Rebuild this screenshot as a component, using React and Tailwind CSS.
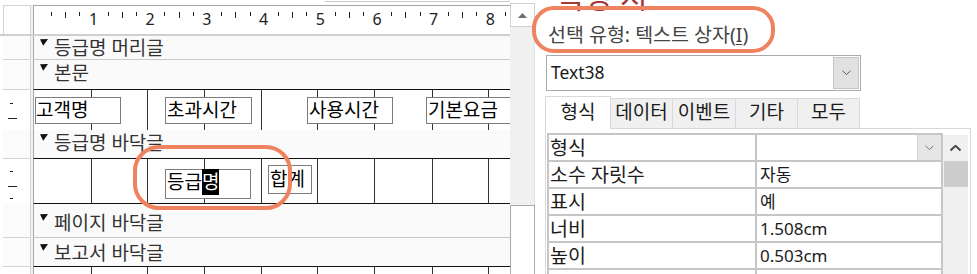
import React from "react";

// column widths of the 1cm design grid (line drawn on the right edge of each)
const gridCols = [
  "w-[58px]",
  "w-[56px]",
  "w-[57px]",
  "w-[57px]",
  "w-[56px]",
  "w-[57px]",
  "w-[58px]",
  "w-[56px]",
];

const GridLines = () => (
  <div className="flex h-full">
    {gridCols.map((w, i) => (
      <div key={i} className={`h-full shrink-0 border-r border-[#333] ${w}`} />
    ))}
  </div>
);

const Marker = () => (
  <svg width="8" height="7" viewBox="0 0 8 7" className="mt-[1px] shrink-0">
    <path d="M0 0.3 L8 0 L3.2 6.8 Z" fill="#111" />
  </svg>
);

const Ruler = () => {
  const ticks = [];
  const nums = [];
  for (let k = 0; k < 9; k++) {
    const p = 2.8 + 56.7 * k;
    [1, 2, 3].forEach((q) => {
      const x = Math.round(p + 14.2 * q) + 0.5;
      ticks.push(
        <line key={`${k}-${q}`} x1={x} x2={x} y1={6} y2={q === 2 ? 12 : 10} stroke="#222" strokeWidth="1" />
      );
    });
    if (k > 0) {
      nums.push(
        <text key={k} x={p} y={19} fontSize="16" textAnchor="middle" fill="#222" fontFamily="Noto Sans, sans-serif">
          {k}
        </text>
      );
    }
  }
  return (
    <svg width="476" height="28" className="block">
      {ticks}
      {nums}
    </svg>
  );
};

const VTicks = ({ h, marks }) => (
  <svg width="27" height={h} className="block">
    {marks.map(([y, long], i) => (
      <line key={i} x1={long ? 5 : 7} x2={long ? 14 : 10} y1={y + 0.5} y2={y + 0.5} stroke="#222" />
    ))}
  </svg>
);

const Section = ({ label, rowClass, barClass, pad }) => (
  <div className={`flex shrink-0 ${rowClass}`}>
    <div className="ml-[3px] w-[28px] shrink-0 border-b border-r border-[#d3d3d3] bg-[#fbfbfb]" />
    <div className="w-[2px] shrink-0 bg-[#f2f2f2]" />
    <div className={`flex flex-1 items-start gap-[6px] border-l border-[#a6a6a6] bg-[#fafafa] pl-[6px] ${barClass} ${pad}`}>
      <Marker />
      <span className="text-[19px] leading-[20px] text-[#333]">{label}</span>
    </div>
  </div>
);

const Field = ({ className, children }) => (
  <div className={`absolute border border-[#7c7c7c] bg-white text-[19px] leading-[20px] whitespace-nowrap text-black ${className}`}>
    {children}
  </div>
);

const DesignView = () => (
  <div className="flex w-[510px] shrink-0 flex-col">
    <div className="h-[5px] shrink-0">
      <div className="ml-[325px] mt-[1px] border-t border-[#c8c8c8]" />
    </div>

    <div className="flex h-[31px] shrink-0 border-b-2 border-[#cfcfcf]">
      <div className="ml-[3px] w-[28px] shrink-0 border-x border-t border-[#d3d3d3]" />
      <div className="w-[2px] shrink-0 bg-[#f2f2f2]" />
      <div className="flex-1 border-l border-t border-[#a6a6a6] bg-white">
        <Ruler />
      </div>
    </div>

    <Section label="등급명 머리글" rowClass="h-[24px]" barClass="border-b border-b-[#c8c8c8]" pad="pt-[2px]" />
    <Section label="본문" rowClass="h-[30px]" barClass="border-b border-b-[#111]" pad="pt-[3px]" />

    <div className="flex h-[40px] shrink-0">
      <div className="ml-[3px] w-[28px] shrink-0 border-r border-[#d3d3d3] bg-white">
        <VTicks h={40} marks={[[13, false], [28, true]]} />
      </div>
      <div className="w-[2px] shrink-0 bg-[#f2f2f2]" />
      <div className="relative flex-1 overflow-hidden border-l border-[#a6a6a6] bg-white">
        <GridLines />
        <Field className="left-[1px] top-[7px] h-[27px] w-[86px] pt-[2px]">고객명</Field>
        <Field className="left-[131px] top-[7px] h-[27px] w-[87px] pl-[1px] pt-[2px]">초과시간</Field>
        <Field className="left-[273px] top-[7px] h-[27px] w-[86px] pl-[1px] pt-[2px]">사용시간</Field>
        <Field className="left-[392px] top-[7px] h-[27px] w-[90px] pl-[1px] pt-[2px]">기본요금</Field>
      </div>
    </div>

    <Section label="등급명 바닥글" rowClass="h-[29px]" barClass="border-b border-b-[#111]" pad="pt-[3px]" />

    <div className="flex h-[45px] shrink-0">
      <div className="ml-[3px] w-[28px] shrink-0 border-r border-[#d3d3d3] bg-white">
        <VTicks h={45} marks={[[12, false], [27, true], [39, false]]} />
      </div>
      <div className="w-[2px] shrink-0 bg-[#f2f2f2]" />
      <div className="relative flex-1 overflow-hidden border-b border-l border-[#a6a6a6] border-b-[#111] bg-white">
        <GridLines />
        <Field className="left-[131px] top-[10px] h-[30px] w-[86px] pl-[1px] pt-[2px]">
          등급<span className="bg-black text-white">명</span>
        </Field>
        <Field className="left-[234px] top-[6px] h-[29px] w-[44px] pl-[1px] pt-[3px]">합계</Field>
      </div>
    </div>

    <Section label="페이지 바닥글" rowClass="h-[34px]" barClass="border-b border-b-[#c8c8c8]" pad="pt-[9px]" />
    <Section label="보고서 바닥글" rowClass="h-[29px]" barClass="border-b border-b-[#111]" pad="pt-[5px]" />

    <div className="flex flex-1">
      <div className="ml-[3px] w-[28px] shrink-0 border-r border-[#d3d3d3] bg-white" />
      <div className="w-[2px] shrink-0 bg-[#f2f2f2]" />
      <div className="flex-1 overflow-hidden border-l border-[#a6a6a6] bg-white">
        <GridLines />
      </div>
    </div>
  </div>
);

const ScrollColumn = () => (
  <div className="flex w-[25px] shrink-0 flex-col pt-[3px]">
    <div className="flex h-[24px] shrink-0 items-center justify-center border border-[#d0d0d0] bg-white">
      <svg width="9" height="5" viewBox="0 0 9 5">
        <path d="M0 5 L4.5 0 L9 5 Z" fill="#6e6e6e" />
      </svg>
    </div>
    <div className="h-[178px] shrink-0 border-r border-[#e2e2e2] bg-[#f0f0f0]" />
    <div className="flex-1 border-x border-t border-[#a9a9a9] bg-white" />
  </div>
);

const Chevron = ({ up, color = "#666", w = 9, sw = 1 }) => (
  <svg width={w} height={Math.ceil(w / 2) + 1} viewBox={`0 0 ${w} ${Math.ceil(w / 2) + 1}`}>
    <path
      d={up ? `M0.5 ${w / 2} L${w / 2} 0.8 L${w - 0.5} ${w / 2}` : `M0.5 0.8 L${w / 2} ${w / 2} L${w - 0.5} 0.8`}
      fill="none"
      stroke={color}
      strokeWidth={sw}
    />
  </svg>
);

const tabs = [
  ["형식", "w-[66px]", true],
  ["데이터", "w-[62px]"],
  ["이벤트", "w-[63px]"],
  ["기타", "w-[62px]"],
  ["모두", "w-[62px]"],
];

const rows = [
  ["형식", "", true],
  ["소수 자릿수", "자동"],
  ["표시", "예"],
  ["너비", "1.508cm"],
  ["높이", "0.503cm"],
  ["", ""],
];

const PropertySheet = () => (
  <div className="flex w-[432px] shrink-0 flex-col">
    <div className="h-[13px] shrink-0 overflow-hidden pl-[12px]">
      <div className="mt-[-18px] text-[30px] leading-[30px] whitespace-nowrap text-[#a4373a]">속성 시트</div>
    </div>
    <div className="mt-[10px] pl-[3px] text-[19.5px] leading-[24px] whitespace-nowrap text-[#444]">
      선택 유형: 텍스트 상자(<span className="underline underline-offset-2">I</span>)
    </div>
    <div className="ml-[1px] mt-[8px] flex h-[36px] w-[315px] shrink-0 border border-[#ababab] bg-white">
      <div className="flex flex-1 items-center pb-[2px] pl-[4px] text-[17.5px] leading-[20px]">Text38</div>
      <div className="my-[1px] mr-[1px] flex w-[26px] items-center justify-center border border-[#c4c4c4] bg-[#e1e1e1]">
        <Chevron color="#555" />
      </div>
    </div>
    <div className="mt-[5px] flex h-[33px] w-[426px] shrink-0 items-end border-b border-[#d9d9d9]">
      {tabs.map(([label, w, active]) => (
        <div
          key={label}
          className={
            active
              ? `-mb-px flex h-[33px] shrink-0 items-end justify-center border-x border-t border-[#d9d9d9] bg-white pb-[7px] text-[19px] leading-[20px] ${w}`
              : `flex h-[30px] shrink-0 items-end justify-center border-r border-t border-[#d9d9d9] bg-[#f0f0f0] pb-[6px] text-[19px] leading-[20px] ${w}`
          }
        >
          {label}
        </div>
      ))}
    </div>
    <div className="flex w-[426px] flex-1 items-start border-x border-[#d9d9d9] pl-[1px] pt-[4px]">
      <div className="w-[396px] shrink-0 border-x-2 border-t-2 border-[#c6c6c6]">
        {rows.map(([k, v, dd], i) => (
          <div key={i} className="flex h-[27px] border-b-2 border-[#c6c6c6] text-[19.5px] leading-[25px]">
            <div className="w-[208px] shrink-0 border-r-2 border-[#c6c6c6] pl-[1px]">{k}</div>
            <div className="flex flex-1 justify-between pl-[3px]">
              <span className="text-[17px]">{v}</span>
              {dd && (
                <div className="flex w-[24px] items-center justify-center border-l border-[#d0d0d0] bg-[#e6e6e6]">
                  <Chevron color="#777" />
                </div>
              )}
            </div>
          </div>
        ))}
      </div>
      <div className="mt-[2px] flex h-[200px] w-[25px] shrink-0 flex-col items-center bg-[#f0f0f0]">
        <div className="flex h-[26px] items-center justify-center">
          <Chevron up color="#4a4a4a" w={11} sw={2} />
        </div>
        <div className="h-[26px] w-[24px] bg-[#cdcdcd]" />
      </div>
    </div>
  </div>
);

export default function App() {
  return (
    <div className="relative flex h-[274px] w-[977px] overflow-hidden bg-white font-['Noto_Sans','Noto_Sans_CJK_KR',sans-serif] text-[#1b1b1b]">
      <DesignView />
      <ScrollColumn />
      <div className="w-[10px] shrink-0" />
      <PropertySheet />
      <div className="pointer-events-none absolute left-[532px] top-[6px] h-[47px] w-[243px] rounded-[22px] border-4 border-[#f0835f]" />
      <div className="pointer-events-none absolute left-[133px] top-[145px] h-[65px] w-[159px] rounded-[26px] border-4 border-[#f0835f]" />
    </div>
  );
}
